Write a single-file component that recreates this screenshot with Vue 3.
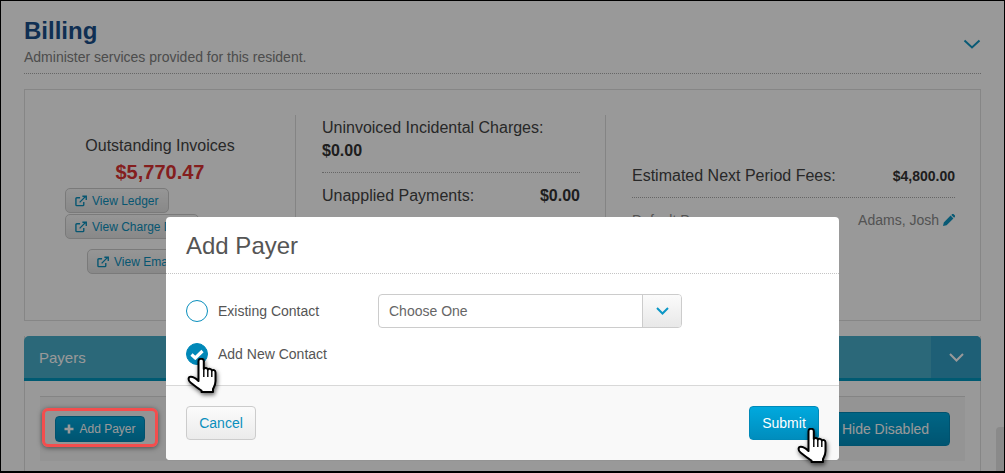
<template>
  <div class="screen">
    <div class="page">
      <header class="billing-head">
        <div>
          <h1>Billing</h1>
          <p>Administer services provided for this resident.</p>
        </div>
        <svg class="collapse" width="18" height="10" viewBox="0 0 18 10"><path d="M1.5 1.5 9 8.5l7.5-7" fill="none" stroke="#0f97c4" stroke-width="2"/></svg>
      </header>

      <section class="summary">
        <div class="col col-one">
          <div class="label center">Outstanding Invoices</div>
          <div class="amount center">$5,770.47</div>
          <a v-for="b in buttons" :key="b.text" class="view" :class="b.cls">
            <svg class="ext" width="12" height="12" viewBox="0 0 13 12"><path d="M9.5 7v3a1 1 0 0 1-1 1H2a1 1 0 0 1-1-1V3.500a1 1 0 0 1 1-1h3.500M5 7.500 11.500 1M8 .8h4.200V5" fill="none" stroke="currentColor" stroke-width="1.500"/></svg>
            {{ b.text }}
          </a>
        </div>
        <div class="col col-two">
          <div class="label">Uninvoiced Incidental Charges:</div>
          <div class="label strong">$0.00</div>
          <div class="rule"></div>
          <div class="line"><span class="label">Unapplied Payments:</span><span class="label strong">$0.00</span></div>
        </div>
        <div class="col col-three">
          <div class="line"><span class="label">Estimated Next Period Fees:</span><b class="small-b">$4,800.00</b></div>
          <div class="rule"></div>
          <div class="line muted">
            <span>Default Payer:</span>
            <span class="payer">Adams, Josh
              <svg width="12" height="12" viewBox="0 0 12 12"><path d="M0 12l.8-3.600L7.600 1.600l2.800 2.800-6.800 6.800zM8.300.9 9.200 0a1 1 0 0 1 1.300 0l1.500 1.500a1 1 0 0 1 0 1.300l-.9.900z" fill="#0f97c4"/></svg>
            </span>
          </div>
        </div>
      </section>

      <section class="payers">
        <div class="payers-bar">
          <span>Payers</span>
          <div class="bar-toggle">
            <svg width="15" height="9" viewBox="0 0 15 9"><path d="M1 1l6.500 6.500L14 1" fill="none" stroke="#fff" stroke-width="2"/></svg>
          </div>
        </div>
        <div class="payers-inner">
          <button class="solid small">
            <svg width="10" height="10" viewBox="0 0 10 10"><path d="M5 .5v9M.5 5h9" stroke="#fff" stroke-width="2.600"/></svg>
            Add Payer
          </button>
          <button class="solid wide">Hide Disabled</button>
        </div>
      </section>
    </div>

    <div class="scrim"></div>
    <div class="thumb"></div>
    <div class="highlight"></div>

    <div class="modal">
      <div class="modal-head">Add Payer</div>
      <div class="modal-body">
        <div class="row">
          <span class="radio"></span>
          <span class="radio-label">Existing Contact</span>
          <div class="select">
            <span class="select-text">Choose One</span>
            <span class="select-btn">
              <svg width="13" height="8" viewBox="0 0 13 8"><path d="M1 1l5.500 5.500L12 1" fill="none" stroke="#0b97c6" stroke-width="2"/></svg>
            </span>
          </div>
        </div>
        <div class="row second">
          <span class="radio on">
            <svg width="14" height="11" viewBox="0 0 14 11"><path d="M1.500 5.500l3.800 3.500L12.500 2" fill="none" stroke="#fff" stroke-width="3.200"/></svg>
          </span>
          <span class="radio-label">Add New Contact</span>
        </div>
      </div>
      <div class="modal-foot">
        <button class="cancel">Cancel</button>
        <button class="solid submit">Submit</button>
      </div>
    </div>

    <svg v-for="h in hands" :key="h" class="hand" :class="h" width="31" height="36" viewBox="0 0 31 36">
      <path d="M11.500 3C11.500 1.200 12.800.8 14 .8s2.800.7 2.800 2.200V11c1.200-1.500 3.500-1.300 4 .6 1.100-1.300 3.500-.9 4 .9 1.200-1 3.700-.5 3.700 2V23c0 4-1.500 6-2.500 8v3H14.500v-1.500C11 30.500 7 27 3.500 24.500 .8 22.500 1 18.700 3.800 18.700c2.500 0 5.500 2 7.700 4.300z" fill="#fff" stroke="#000" stroke-width="2" stroke-linejoin="round"/>
      <path d="M16.800 11v8M20.800 11.600V19M24.800 12.500V19" fill="none" stroke="#000" stroke-width="1.400"/>
    </svg>
  </div>
</template>

<script setup>
const buttons = [
  { text: 'View Ledger', cls: 'ledger' },
  { text: 'View Charge Details', cls: 'charge' },
  { text: 'View Email History', cls: 'email' }
]
const hands = ['hand-radio', 'hand-submit']
</script>

<style>
html, body { margin: 0; overflow: hidden; background: #fff; }
</style>

<style scoped>
.screen {
  position: relative;
  width: 1005px;
  height: 473px;
  box-sizing: border-box;
  border: 1px solid #000;
  border-bottom-width: 2px;
  overflow: hidden;
  background: #fff;
  font-family: "Liberation Sans", Arial, sans-serif;
  color: #333;
}
.page { padding: 16px 23px 0; }
.billing-head {
  display: flex;
  justify-content: space-between;
  align-items: flex-start;
  height: 56px;
  border-bottom: 1px dotted #aaa;
}
h1 { margin: 0 0 2px; font-size: 24px; line-height: 28px; font-weight: 700; color: #1a4f8a; }
.billing-head p { margin: 0; font-size: 14px; line-height: 20px; color: #808080; }
.collapse { margin: 22px 0 0; }

.summary {
  display: grid;
  grid-template-columns: 271px 310px 1fr;
  box-sizing: border-box;
  height: 232px;
  margin-top: 15px;
  padding-top: 25px;
  border: 1px solid #e0e0e0;
}
.col { box-sizing: border-box; height: 180px; }
.col-one { display: flex; flex-direction: column; align-items: flex-start; padding: 20px 0 0 40px; border-right: 1px solid #ddd; }
.col-two { padding: 2px 25px 0 26px; border-right: 1px solid #ddd; }
.col-three { padding: 50px 25px 0 26px; }
.label { font-size: 16px; line-height: 22px; color: #444; }
.center { align-self: center; margin-left: -40px; }
.label.strong { font-weight: 700; color: #333; }
.amount { margin-top: 2px; font-size: 20px; line-height: 26px; font-weight: 700; color: #dc3232; }
.view {
  display: flex;
  align-items: center;
  gap: 5px;
  box-sizing: border-box;
  height: 25px;
  padding: 0 9px;
  border: 1px solid #ccc;
  border-radius: 5px;
  background: linear-gradient(#fafafa, #e4e4e4);
  font-size: 12px;
  color: #0a8fbd;
  white-space: nowrap;
}
.ext { flex: none; }
.ledger { margin-top: 3px; }
.charge { margin-top: 1px; width: 134px; overflow: hidden; }
.email { margin: 10px 0 0 22px; }
.rule { margin: 10px 0 11px; border-top: 1px dotted #aaa; }
.col-two .label.strong { margin-top: 1px; }
.line { display: flex; justify-content: space-between; align-items: center; }
.small-b { font-size: 14px; color: #333; }
.muted { font-size: 14px; line-height: 22px; color: #8a8a8a; }
.muted .payer { display: flex; align-items: center; gap: 4px; }

.payers { margin-top: 15px; height: 135px; border: solid #e0e0e0; border-width: 0 1px; }
.payers-bar {
  display: flex;
  justify-content: space-between;
  box-sizing: border-box;
  height: 45px;
  margin: 0 -1px;
  padding-left: 15px;
  border-bottom: 3px solid #0096bf;
  border-radius: 5px 5px 0 0;
  background: #48aeca;
  color: #fff;
  font-size: 15px;
  line-height: 43px;
}
.bar-toggle {
  display: flex;
  align-items: center;
  justify-content: center;
  width: 50px;
  border-radius: 0 5px 0 0;
  background: #339ec5;
}
.payers-inner {
  display: flex;
  align-items: center;
  justify-content: space-between;
  box-sizing: border-box;
  height: 65px;
  margin: 15px 15px 0;
  padding: 0 15px;
  border-top: 1px solid #ddd;
  background: #f7f7f7;
}
button { font-family: inherit; cursor: default; }
.solid {
  border: 1px solid #0089b8;
  border-radius: 4px;
  background: linear-gradient(#00a9de, #008dbd);
  color: #fff;
}
.small { display: flex; align-items: center; justify-content: center; gap: 5px; width: 90px; height: 26px; padding: 0; font-size: 12px; }
.wide { width: 129px; height: 34px; padding: 0; font-size: 14px; }

.scrim { position: absolute; inset: 0; background: rgba(0, 0, 0, 0.4); }
.thumb { position: absolute; left: 995px; top: 426px; width: 12px; height: 50px; border-radius: 4px 0 0 0; background: #8a8a8a; }
.highlight {
  position: absolute;
  left: 41px;
  top: 407px;
  width: 116px;
  height: 39px;
  box-sizing: border-box;
  border: 3px solid #f44d4d;
  border-radius: 6px;
  box-shadow: 0 1px 5px rgba(0, 0, 0, 0.5);
}

.modal {
  position: absolute;
  left: 165px;
  top: 216px;
  width: 673px;
  height: 243px;
  border-radius: 4px;
  background: #fff;
  overflow: hidden;
}
.modal-head {
  box-sizing: border-box;
  height: 57px;
  padding-left: 20px;
  border-bottom: 1px dotted #c4c4c4;
  font-size: 24px;
  line-height: 57px;
  color: #555;
}
.modal-body { height: 91px; padding: 20px 20px 0; }
.row { display: flex; align-items: center; height: 34px; }
.row.second { height: 22px; margin-top: 15px; }
.radio {
  display: flex;
  align-items: center;
  justify-content: center;
  box-sizing: border-box;
  width: 22px;
  height: 22px;
  border: 1px solid #0a8fbd;
  border-radius: 50%;
}
.radio.on { background: #0088b8; border-color: #0088b8; }
.radio-label { width: 160px; margin-left: 10px; font-size: 14px; color: #555; }
.select {
  display: flex;
  box-sizing: border-box;
  width: 304px;
  height: 34px;
  border: 1px solid #ccc;
  border-radius: 4px;
  overflow: hidden;
}
.select-text { flex: 1; padding-left: 10px; font-size: 14px; line-height: 32px; color: #666; }
.select-btn {
  display: flex;
  align-items: center;
  justify-content: center;
  box-sizing: border-box;
  width: 39px;
  border-left: 1px solid #ccc;
  background: linear-gradient(#fbfbfb, #e8e8e8);
}
.modal-foot {
  display: flex;
  align-items: center;
  justify-content: space-between;
  box-sizing: border-box;
  height: 75px;
  padding: 0 20px;
  border-top: 1px solid #d8d8d8;
  background: #f9f9f9;
}
.cancel {
  width: 70px;
  height: 34px;
  padding: 0;
  border: 1px solid #ccc;
  border-radius: 4px;
  background: linear-gradient(#fbfbfb, #ebebeb);
  font-size: 14px;
  color: #0a8fbd;
}
.submit { width: 70px; height: 34px; padding: 0; font-size: 14px; }

.hand { position: absolute; filter: drop-shadow(1px 2px 2px rgba(0, 0, 0, 0.6)); }
.hand-radio { left: 186px; top: 357px; }
.hand-submit { left: 796px; top: 427px; }
</style>
